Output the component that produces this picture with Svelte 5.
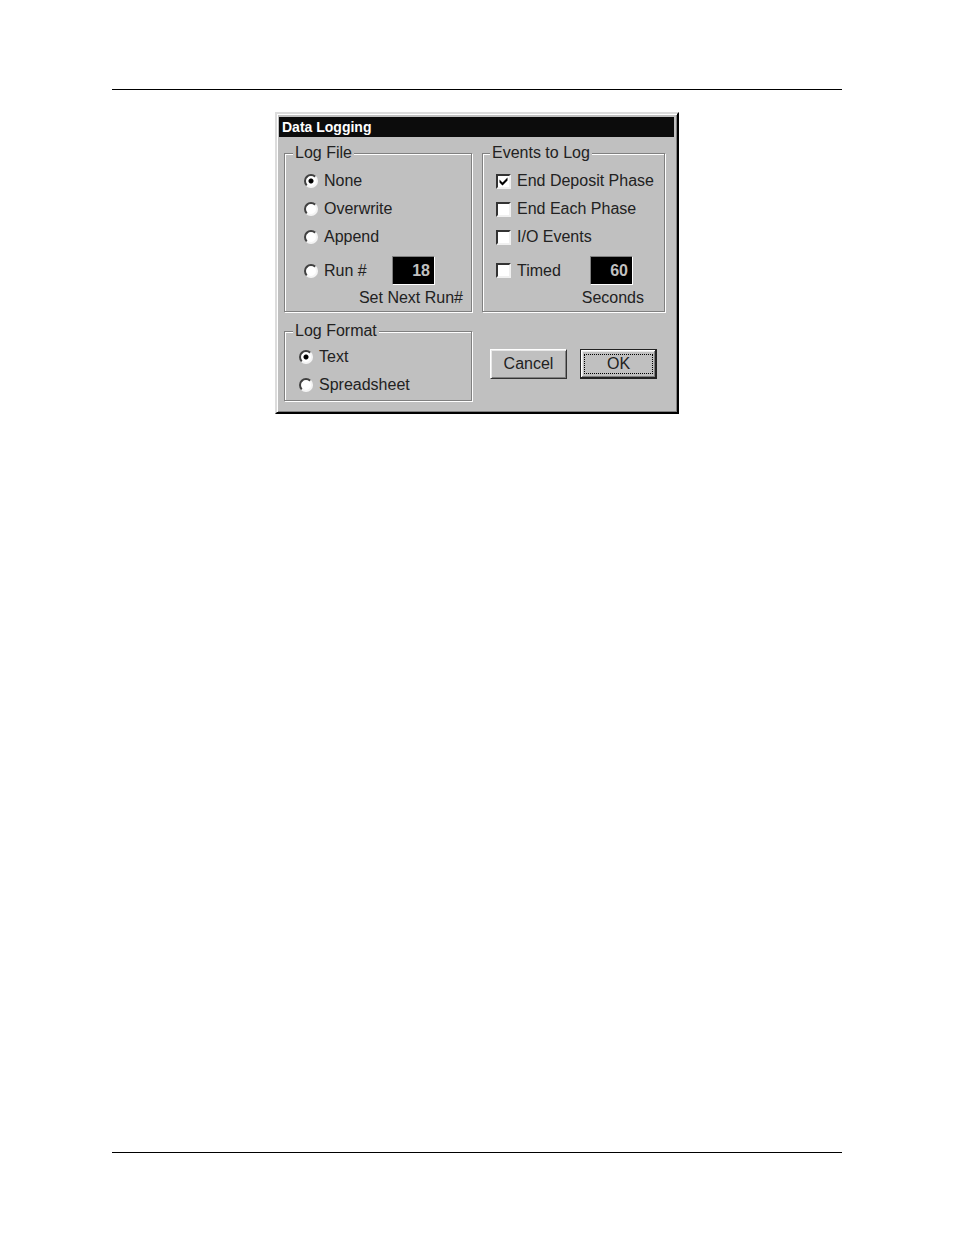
<script>
	const fileModes = ["None", "Overwrite", "Append"];
	const formats = ["Text", "Spreadsheet"];

	let fileMode = $state("None");
	let format = $state("Text");
	let nextRun = $state("18");
	let seconds = $state("60");
	let timed = $state(false);

	let events = $state([
		{ label: "End Deposit Phase", checked: true },
		{ label: "End Each Phase", checked: false },
		{ label: "I/O Events", checked: false }
	]);
</script>

<div class="page">
	<main>
		<form class="dialog" onsubmit={(e) => e.preventDefault()}>
			<h1 class="title">Data Logging</h1>

			<div class="body">
				<fieldset class="log-file">
					<legend>Log File</legend>
					{#each fileModes as mode}
						<label class="row">
							<input type="radio" name="file" value={mode} bind:group={fileMode} />
							{mode}
						</label>
					{/each}
					<div class="value-row">
						<label class="row">
							<input type="radio" name="file" value="Run" bind:group={fileMode} />
							Run #
						</label>
						<input id="next-run" class="value" type="text" bind:value={nextRun} />
					</div>
					<label class="caption" for="next-run">Set Next Run#</label>
				</fieldset>

				<fieldset class="events">
					<legend>Events to Log</legend>
					{#each events as event}
						<label class="row">
							<input type="checkbox" bind:checked={event.checked} />
							{event.label}
						</label>
					{/each}
					<div class="value-row">
						<label class="row">
							<input type="checkbox" bind:checked={timed} />
							Timed
						</label>
						<input id="seconds" class="value" type="text" bind:value={seconds} />
					</div>
					<label class="caption" for="seconds">Seconds</label>
				</fieldset>

				<fieldset class="log-format">
					<legend>Log Format</legend>
					{#each formats as name}
						<label class="row">
							<input type="radio" name="format" value={name} bind:group={format} />
							{name}
						</label>
					{/each}
				</fieldset>

				<div class="buttons">
					<button type="button">Cancel</button>
					<button type="submit" class="default"><span>OK</span></button>
				</div>
			</div>
		</form>
	</main>
</div>

<style>
	:global(body) {
		background: #fff;
	}

	.page {
		box-sizing: border-box;
		min-height: 100vh;
		padding: 89px 112px 82px;
		display: flex;
		font-family: "Liberation Sans", Arial, sans-serif;
		font-size: 16px;
		line-height: 18px;
		color: #222;
	}

	main {
		flex: 1;
		padding-top: 22px;
		border-top: 1px solid #000;
		border-bottom: 1px solid #000;
	}

	.dialog {
		box-sizing: border-box;
		width: 404px;
		max-width: 100%;
		margin: 0 auto;
		padding: 3px 3px 11px 2px;
		background: #c0c0c0;
		border: 2px solid;
		border-color: #dcdcdc #000 #000 #dcdcdc;
		box-shadow:
			inset 1px 1px #fff,
			inset -1px -1px #808080;
	}

	.title {
		margin: 0;
		padding: 0 3px;
		background: #0c0c0c;
		color: #fff;
		font-size: 14px;
		line-height: 20px;
		font-weight: bold;
	}

	.body {
		display: grid;
		grid-template-columns: 188fr 183fr;
		gap: 10px;
		padding: 7px 9px 0 5px;
	}

	fieldset {
		min-width: 0;
		margin: 0;
		border: 1px solid #808080;
		box-shadow:
			1px 1px #fff,
			inset 1px 1px #fff;
	}

	.log-file {
		padding: 5px 8px 4px 19px;
	}

	.events {
		padding: 5px 8px 4px 13px;
	}

	.log-format {
		padding: 3px 8px 1px 14px;
	}

	legend {
		margin-left: -6px;
		padding: 0 2px;
		background: #c0c0c0;
	}

	.log-file legend {
		margin-left: -11px;
	}

	.row {
		display: flex;
		align-items: center;
		gap: 6px;
		height: 28px;
		white-space: nowrap;
	}

	.value-row {
		display: flex;
		align-items: center;
		justify-content: space-between;
		padding: 5px 28px 4px 0;
	}

	.events .value-row {
		padding-right: 23px;
	}

	.caption {
		display: block;
		text-align: right;
	}

	.events .caption {
		padding-right: 12px;
	}

	input {
		box-sizing: border-box;
		flex-shrink: 0;
		appearance: none;
		margin: 0;
	}

	input[type="radio"] {
		width: 14px;
		height: 14px;
		border: 2px solid;
		border-color: #404040 #f4f4f4 #f4f4f4 #404040;
		border-radius: 50%;
		background: #fff;
	}

	input[type="radio"]:checked {
		background: radial-gradient(circle, #000 2px, #fff 3px);
	}

	input[type="checkbox"] {
		width: 15px;
		height: 15px;
		border: 2px solid;
		border-color: #333 #f0f0f0 #f0f0f0 #333;
		background: #fff;
	}

	input[type="checkbox"]:checked {
		background: #fff
			url("data:image/svg+xml,%3Csvg xmlns='http://www.w3.org/2000/svg' viewBox='0 0 11 11'%3E%3Cpath d='M1.5 3.5 L4.5 6.5 L9.5 1.5 V4.5 L4.5 9.5 L1.5 6.5 Z'/%3E%3C/svg%3E")
			center / 11px 11px no-repeat;
	}

	.value {
		width: 43px;
		height: 29px;
		padding: 0 4px;
		border: 1px solid;
		border-color: #808080 #fff #fff #808080;
		background: #000;
		color: #c0c0c0;
		font: bold 16px "Liberation Sans", Arial, sans-serif;
		text-align: right;
	}

	.buttons {
		display: flex;
		align-items: center;
		justify-content: flex-end;
		gap: 13px;
		padding: 4px 8px 0 0;
	}

	button {
		box-sizing: border-box;
		width: 77px;
		height: 30px;
		padding: 0;
		border: 1px solid;
		border-color: #fff #333 #333 #fff;
		box-shadow:
			inset 1px 1px #e8e8e8,
			inset -1px -1px #808080;
		background: #c0c0c0;
		color: #222;
		font: inherit;
	}

	.default {
		padding: 3px;
		border-color: #222;
		box-shadow:
			inset -1px -1px #222,
			inset 1px 1px #fff,
			inset -2px -2px #808080,
			inset 2px 2px #e8e8e8;
	}

	.default span {
		display: block;
		border: 1px dotted #000;
	}
</style>
